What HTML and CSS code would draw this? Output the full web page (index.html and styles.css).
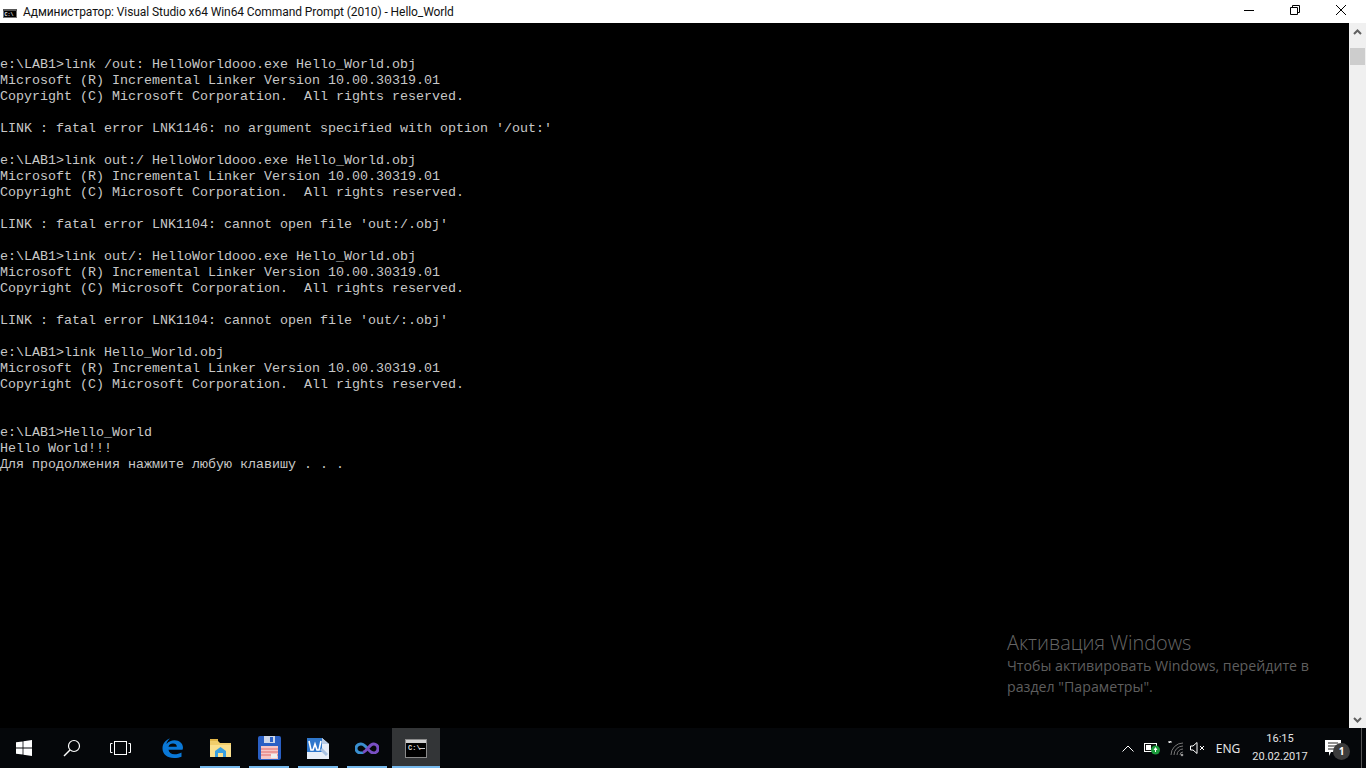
FILE: index.html
```html
<!DOCTYPE html>
<html lang="ru">
<head>
<meta charset="utf-8">
<title>Hello_World</title>
<link rel="stylesheet" href="styles.css">
</head>
<body>
<div class="window">
  <header class="titlebar">
    <svg class="app-icon" width="14" height="9" viewBox="0 0 14 9"><rect width="14" height="9" fill="#777"/><rect x="0" y="0" width="14" height="2" fill="#555"/><rect x="1" y="2" width="12" height="6" fill="#000"/><text x="1.500" y="7" class="icon-text-sm">C:\</text></svg>
    <span class="title-text">Администратор: Visual Studio x64 Win64 Command Prompt (2010) - Hello_World</span>
    <div class="controls">
      <span class="ctl"><svg width="10" height="10" viewBox="0 0 10 10"><path d="M0 5.500h10" stroke="#000" fill="none"/></svg></span>
      <span class="ctl"><svg width="10" height="10" viewBox="0 0 10 10"><path d="M.5 2.500h7v7h-7zM2.500 2.500v-2h7v7h-2" stroke="#000" fill="none"/></svg></span>
      <span class="ctl"><svg width="10" height="10" viewBox="0 0 10 10"><path d="M0 0l10 10M10 0L0 10" stroke="#000" fill="none"/></svg></span>
    </div>
  </header>
  <div class="body-row">
<pre class="console">


e:\LAB1&gt;link /out: HelloWorldooo.exe Hello_World.obj
Microsoft (R) Incremental Linker Version 10.00.30319.01
Copyright (C) Microsoft Corporation.  All rights reserved.

LINK : fatal error LNK1146: no argument specified with option '/out:'

e:\LAB1&gt;link out:/ HelloWorldooo.exe Hello_World.obj
Microsoft (R) Incremental Linker Version 10.00.30319.01
Copyright (C) Microsoft Corporation.  All rights reserved.

LINK : fatal error LNK1104: cannot open file 'out:/.obj'

e:\LAB1&gt;link out/: HelloWorldooo.exe Hello_World.obj
Microsoft (R) Incremental Linker Version 10.00.30319.01
Copyright (C) Microsoft Corporation.  All rights reserved.

LINK : fatal error LNK1104: cannot open file 'out/:.obj'

e:\LAB1&gt;link Hello_World.obj
Microsoft (R) Incremental Linker Version 10.00.30319.01
Copyright (C) Microsoft Corporation.  All rights reserved.


e:\LAB1&gt;Hello_World
Hello World!!!
Для продолжения нажмите любую клавишу . . .</pre>
    <aside class="scrollbar">
      <svg class="sb-arrow" width="9" height="6" viewBox="0 0 9 6"><path d="M1 5l3.500-3.500L8 5" stroke="#606060" stroke-width="2" fill="none"/></svg>
      <div class="sb-thumb"></div>
      <svg class="sb-arrow sb-down" width="9" height="6" viewBox="0 0 9 6"><path d="M1 1l3.500 3.500L8 1" stroke="#606060" stroke-width="2" fill="none"/></svg>
    </aside>
  </div>
  <div class="watermark">
    <div class="wm-title">Активация Windows</div>
    <div class="wm-text">Чтобы активировать Windows, перейдите в<br>раздел "Параметры".</div>
  </div>
</div>
<footer class="taskbar">
  <div class="tb-slot">
    <svg width="16" height="16" viewBox="0 0 16 16"><path d="M0 2.300l6.600-.9v6.200H0zM7.400 1.300L16 0v7.600H7.400zM0 8.400h6.600v6.200L0 13.700zM7.400 8.400H16V16l-8.600-1.300z" fill="#fff"/></svg>
  </div>
  <div class="tb-slot">
    <svg width="18" height="18" viewBox="0 0 18 18"><circle cx="11" cy="7" r="5.500" stroke="#fff" stroke-width="1.200" fill="none"/><path d="M7 11l-6 6" stroke="#fff" stroke-width="1.400"/></svg>
  </div>
  <div class="tb-slot">
    <svg width="21" height="14" viewBox="0 0 21 14"><rect x="4.500" y=".5" width="12" height="13" stroke="#fff" fill="none"/><path d="M2.500 2.500H.5v9h2M18.500 2.500h2v9h-2" stroke="#fff" fill="none"/></svg>
  </div>
  <div class="tb-slot edge-slot">
    <svg width="21" height="20" viewBox="0 0 21 22" preserveAspectRatio="none"><path d="M20.500 13H6.500c.3 3 2.600 5 6 5 2.700 0 5-.7 7-2v4.500c-2 1-4.500 1.500-7.500 1.500C5 22 .5 17.500.5 11.500.5 6 3.500 2 8 .5 5.800 2.500 4.800 4.500 4.500 6.500 6.500 4 9.500 2.500 12.500 2.500c5 0 8.500 3.500 8.500 8.500zM14.800 9.500c0-2.300-1.500-3.500-3.800-3.500-2.300 0-4 1.300-4.500 3.500z" fill="#0a78d7"/></svg>
  </div>
  <div class="tb-app running">
    <svg width="21" height="18" viewBox="0 0 21 18"><path d="M0 2h8l2 2h11v14H0z" fill="#f1cd6b"/><path d="M0 0h8v2H0z" fill="#e2b64a"/><path d="M0 6h21v12H0z" fill="#fbe08e"/><path d="M5 12l5.500-4 5.500 4v6h-3v-4H8v4H5z" fill="#3aa0e0"/></svg>
  </div>
  <div class="tb-app running">
    <svg width="23" height="24" viewBox="0 0 23 24"><rect width="23" height="24" rx="2" fill="#2a5fc4"/><rect x="6" y="0" width="11" height="7" fill="#cfd8ea"/><rect x="12" y="1" width="3" height="5" fill="#2a5fc4"/><rect x="3" y="10" width="17" height="13" fill="#f6c6c6"/><path d="M3 13h17M3 16h17M3 19h17" stroke="#e06a6a"/><rect x="13" y="18" width="6" height="4" fill="#eee"/></svg>
  </div>
  <div class="tb-app running">
    <svg width="22" height="22" viewBox="0 0 22 22"><path d="M0 1h15l7 6v15H0z" fill="#e8eef8"/><path d="M15 1l7 6h-7z" fill="#b8cbe6"/><rect x="0" y="1" width="15" height="14" fill="#2f77cc"/><path d="M2 4l2 9h2l2-6 2 6h2l2-9" stroke="#fff" stroke-width="1.600" fill="none"/><path d="M14 12l6 6" stroke="#a9c2e3" stroke-width="3"/></svg>
  </div>
  <div class="tb-app running">
    <svg width="24" height="12" viewBox="0 0 24 12"><path d="M8 10.500C5 12 1 10 1 6.500 1 3 5 1 8 2.500c2 1 3 2.500 4.500 4" stroke="#3a8fd0" stroke-width="3" fill="none"/><path d="M8 10.500c3-1 5-5 8-7.500 3-2 7-.5 7 3.500s-4 5.500-7 3.500c-1-.7-2-1.500-3-3" stroke="#7a4fc4" stroke-width="3" fill="none"/></svg>
  </div>
  <div class="tb-app active">
    <svg width="22" height="19" viewBox="0 0 22 19"><rect width="22" height="19" fill="#8a8a8a"/><rect x="1" y="1" width="20" height="3" fill="#d0d0d0"/><rect x="1" y="4" width="20" height="14" fill="#000"/><text x="3" y="11" class="icon-text">C:\</text><rect x="14" y="9" width="6" height="1" fill="#ccc"/></svg>
  </div>
  <div class="tray">
    <span class="tray-item"><svg width="12" height="7" viewBox="0 0 12 7"><path d="M.5 6.500L6 1l5.500 5.500" stroke="#fff" fill="none"/></svg></span>
    <span class="tray-item"><svg width="16" height="14" viewBox="0 0 16 14"><rect x=".5" y="2.500" width="12" height="8" stroke="#fff" fill="#111"/><rect x="2" y="4" width="5" height="5" fill="#fff"/><circle cx="11.500" cy="9" r="4.500" fill="#1a9a3a"/><path d="M11.500 6l-2 3h1.500v2h1V9H13.500z" fill="#fff"/></svg></span>
    <span class="tray-item"><svg width="16" height="17" viewBox="0 0 16 17"><path d="M1 1l1 2M3 1L1 3M0 2h4" stroke="#fff" stroke-width=".8"/><path d="M3 15A12 12 0 0 1 15 3M6 15a9 9 0 0 1 9-9M9 15a6 6 0 0 1 6-6M12 15a3 3 0 0 1 3-3" stroke="#777" fill="none"/><circle cx="14" cy="15" r="1.300" fill="#999"/></svg></span>
    <span class="tray-item tray-vol"><svg width="15" height="12" viewBox="0 0 15 12"><path d="M.5 4v4h2.500l4 3.500V.5L3 4z" stroke="#fff" fill="none"/><path d="M10 4l4 4M14 4l-4 4" stroke="#fff" fill="none"/></svg></span>
    <span class="tray-lang">ENG</span>
    <div class="clock"><span>16:15</span><span>20.02.2017</span></div>
    <span class="notif">
      <svg width="16" height="16" viewBox="0 0 16 16"><path d="M0 0h16v12H6l-2 4v-4H0z" fill="#fff"/><path d="M3 3h10M3 6h10M3 9h7" stroke="#222"/></svg>
      <span class="badge">1</span>
    </span>
    <span class="show-desktop"></span>
  </div>
</footer>
</body>
</html>
```
FILE: styles.css
```css
* { box-sizing: border-box; }
html, body { margin: 0; height: 100%; overflow: hidden; }
body {
  width: 1366px;
  height: 768px;
  display: flex;
  flex-direction: column;
  background: #000;
}
.window {
  position: relative;
  flex: 1;
  display: flex;
  flex-direction: column;
  min-height: 0;
}
.titlebar {
  height: 23px;
  background: #fff;
  display: flex;
  align-items: center;
  padding-left: 3px;
  flex: none;
}
.app-icon { margin: 3px 6px 0 0; flex: none; }
.icon-text-sm { font: bold 5px "Liberation Mono", monospace; fill: #eee; }
.icon-text { font: bold 7px "Liberation Mono", monospace; fill: #ddd; }
.title-text {
  font: 12px/1 Roboto, sans-serif;
  letter-spacing: -0.08px;
  color: #111;
  white-space: nowrap;
}
.controls { margin-left: auto; display: flex; height: 100%; padding-right: 2px; }
.ctl {
  width: 46px;
  display: flex;
  align-items: center;
  justify-content: center;
  padding-bottom: 3px;
}
.body-row { flex: 1; display: flex; min-height: 0; }
.console {
  flex: 1;
  margin: 0;
  padding: 2px 0 0;
  background: #000;
  color: #c8c8c8;
  font: 13.333px/16px "Liberation Mono", monospace;
  overflow: hidden;
}
.scrollbar {
  width: 17px;
  flex: none;
  background: #f0f0f0;
  display: flex;
  flex-direction: column;
  align-items: center;
  padding: 6px 0 5px;
}
.sb-arrow { flex: none; }
.sb-thumb {
  width: 15px;
  height: 17px;
  margin-top: 13px;
  background: #cdcdcd;
}
.sb-down { margin-top: auto; }
.watermark {
  position: absolute;
  left: 1007px;
  top: 629px;
  font-family: "Open Sans", sans-serif;
  font-weight: 300;
  color: #666;
  white-space: nowrap;
}
.wm-title { font-size: 19.900px; line-height: 27px; }
.wm-text { font-size: 14.200px; line-height: 21px; font-weight: 400; color: #5e5e5e; margin-top: -1px; }
.taskbar {
  height: 40px;
  flex: none;
  background: #05070a;
  display: flex;
  color: #fff;
}
.tb-slot, .tb-app {
  width: 48px;
  display: flex;
  align-items: center;
  justify-content: center;
  flex: none;
}
.edge-slot { margin-left: 4px; }
.tb-app { margin-right: 1px; position: relative; }
.running::after {
  content: "";
  position: absolute;
  left: 4px;
  right: 4px;
  bottom: 0;
  height: 2px;
  background: #76b9ed;
}
.active { background: #333537; margin-right: 0; }
.active::after {
  content: "";
  position: absolute;
  left: 0;
  right: 0;
  bottom: 0;
  height: 2px;
  background: #76b9ed;
}
.tray {
  margin-left: auto;
  display: flex;
  align-items: center;
  height: 100%;
}
.tray-item {
  width: 24px;
  display: flex;
  align-items: center;
  justify-content: center;
  height: 100%;
}
.tray-vol { width: 21px; padding-right: 3px; }
.tray-lang {
  width: 38px;
  text-align: center;
  font: 12px "Noto Sans", sans-serif;
  color: #e4e4e4;
}
.clock {
  width: 66px;
  height: 100%;
  display: flex;
  flex-direction: column;
  align-items: center;
  justify-content: center;
  font: 11px/18px Roboto, sans-serif;
  color: #e4e4e4;
}
.notif {
  width: 40px;
  height: 100%;
  position: relative;
  display: flex;
  align-items: center;
  justify-content: center;
}
.badge {
  position: absolute;
  left: 20px;
  top: 15px;
  width: 17px;
  height: 17px;
  border-radius: 50%;
  background: #3c3c3c;
  color: #fff;
  font: bold 10px/17px "Noto Sans", sans-serif;
  text-align: center;
}
.show-desktop {
  width: 13px;
  height: 100%;
  position: relative;
}
.show-desktop::before {
  content: "";
  position: absolute;
  left: 8px;
  top: 0;
  bottom: 0;
  width: 1px;
  background: #555;
}
```
